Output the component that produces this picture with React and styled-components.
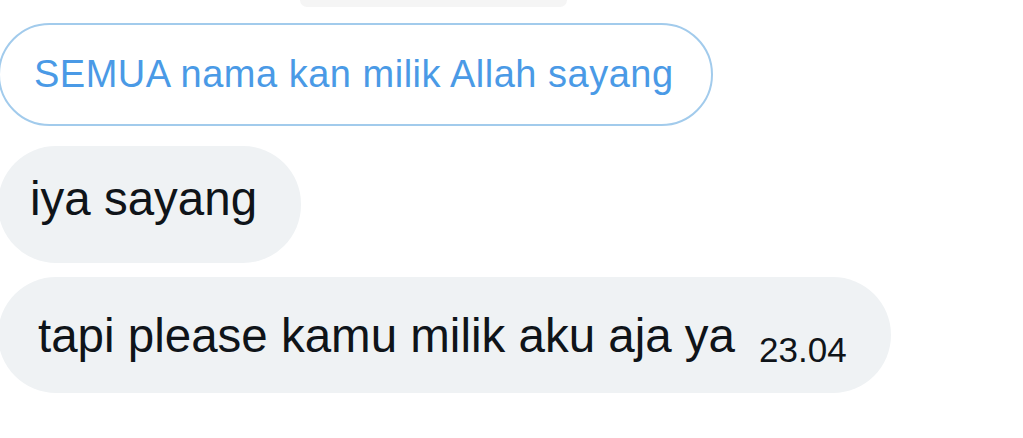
import styled, { createGlobalStyle } from "styled-components";

const GlobalStyle = createGlobalStyle`
    body {
        margin: 0;
        background: #FFFFFF;
        font-family: "Liberation Sans", Arial, sans-serif;
        overflow: hidden;
    }
`

const Conversa = styled.div`
    display: flex;
    flex-direction: column;
    align-items: flex-start;
    margin-left: -2px;
`

const BolhaCortada = styled.div`
    width: 267px;
    height: 7px;
    margin-left: 302px;
    background: #F5F5F5;
    border-radius: 0 0 40px 40px;
`

const Citacao = styled.div`
    margin-top: 16px;
    padding: 30px 37px 31px 34px;
    border: 2px solid #A2CBEC;
    border-radius: 52px;
    color: #4A9AE6;
    font-size: 38px;
    line-height: 38px;
    letter-spacing: 0.5px;
    white-space: nowrap;
`

const Bolha = styled.div`
    margin-top: ${props => props.$espaco}px;
    padding: ${props => props.$topo}px ${props => props.$direita}px ${props => props.$baixo}px ${props => props.$esquerda}px;
    background: #EFF2F4;
    border-radius: 58px;
    color: #0F1419;
    font-size: 47.5px;
    line-height: 47px;
    white-space: nowrap;
`

const Hora = styled.span`
    margin-left: 24px;
    font-size: 35px;
    line-height: 0;
    vertical-align: -10px;
`

function App() {
    return (
        <>
            <GlobalStyle />
            <Conversa>
                <BolhaCortada />
                <Citacao>SEMUA nama kan milik Allah sayang</Citacao>
                <Bolha $espaco={20} $topo={29} $baixo={41} $esquerda={32} $direita={44}>iya sayang</Bolha>
                <Bolha $espaco={14} $topo={35} $baixo={34} $esquerda={40} $direita={44}>
                    tapi please kamu milik aku aja ya<Hora>23.04</Hora>
                </Bolha>
            </Conversa>
        </>
    )
}

export default App;
